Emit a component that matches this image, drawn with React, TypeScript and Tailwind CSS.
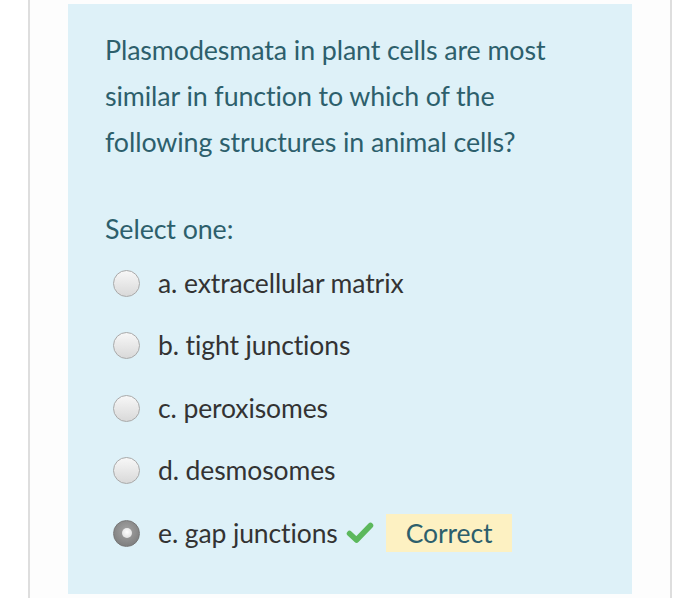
import React from "react";

const font = { fontFamily: "Lato, 'Noto Sans', sans-serif" };

function Radio({ checked }: { checked?: boolean }) {
  if (checked) {
    return (
      <span className="flex h-[27px] w-[27px] shrink-0 items-center justify-center rounded-full border border-[#777777] bg-[radial-gradient(circle_at_50%_40%,#a5a5a5,#747474)]">
        <span className="block h-[10px] w-[10px] rounded-full bg-[radial-gradient(circle_at_50%_40%,#ffffff,#d8d8d8)]" />
      </span>
    );
  }
  return (
    <span className="block h-[27px] w-[27px] shrink-0 rounded-full border-[1.5px] border-[#a9a9a9] bg-[linear-gradient(180deg,#f7f7f7,#d9d9d9)]" />
  );
}

const options = [
  "a. extracellular matrix",
  "b. tight junctions",
  "c. peroxisomes",
  "d. desmosomes",
];

export default function App() {
  return (
    <div className="h-[598px] w-[700px] overflow-hidden bg-white" style={font}>
      <div className="ml-[28px] h-full w-[644px] border-x-2 border-[#dedede] bg-[#fdfdfd] pt-[4px]">
        <div className="mx-[38px] h-[590px] bg-[#def1f8] pl-[37px] pt-[23px]">
          <div className="text-[26.8px] leading-[46px] tracking-[-0.1px] text-[#2d5f6c]">
            <div>Plasmodesmata in plant cells are most</div>
            <div>similar in function to which of the</div>
            <div>following structures in animal cells?</div>
          </div>
          <div className="mt-[41px] text-[26.8px] leading-[46px] tracking-[-0.1px] text-[#2d5f6c]">
            Select one:
          </div>
          <div className="flex flex-col">
            {options.map((o) => (
              <div key={o} className="flex h-[62.5px] items-center">
                <span className="ml-[8px] block">
                  <Radio />
                </span>
                <span className="ml-[18px] text-[26.5px] leading-[31px] tracking-[-0.1px] text-[#333333]">
                  {o}
                </span>
              </div>
            ))}
            <div className="flex h-[62.5px] items-center">
              <span className="ml-[8px] block">
                <Radio checked />
              </span>
              <span className="ml-[18px] text-[26.5px] leading-[31px] tracking-[-0.1px] text-[#333333]">
                e. gap junctions
              </span>
              <svg className="ml-[8px]" width="28" height="24" viewBox="0 0 28 24">
                <polyline
                  points="3.5,12.5 10.5,19 24.5,4.5"
                  fill="none"
                  stroke="#5cb85c"
                  strokeWidth="5.5"
                  strokeLinecap="round"
                  strokeLinejoin="round"
                />
              </svg>
              <span className="ml-[12px] flex h-[38px] items-center bg-[#fdf1c2] px-[20px] text-[26.5px] leading-[31px] tracking-[-0.1px] text-[#2d5f6c]">
                Correct
              </span>
            </div>
          </div>
        </div>
      </div>
    </div>
  );
}
